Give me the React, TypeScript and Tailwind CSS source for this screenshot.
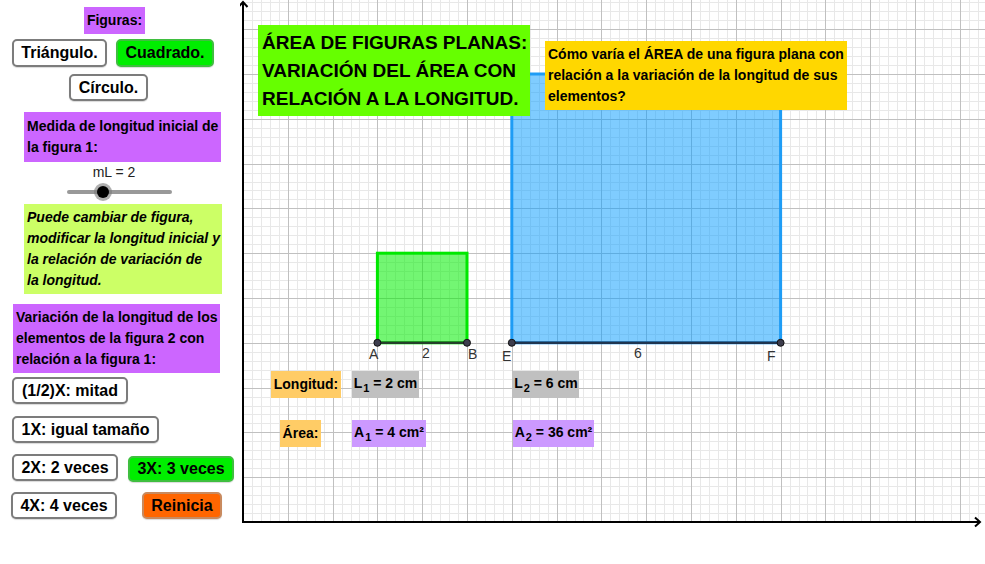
import React from 'react';

const OX = 243;
const OY = 522;
const U = 44.8;
const RIGHT = 985;
const LEFT_W = 240;

function Grid() {
  const minor = U / 5;
  const vLines: { x: number; major: boolean }[] = [];
  for (let i = 1; OX + i * minor <= RIGHT; i++) {
    vLines.push({ x: Math.round(OX + i * minor) + 0.5, major: i % 5 === 0 });
  }
  const hLines: { y: number; major: boolean }[] = [];
  for (let j = 1; OY - j * minor >= 0; j++) {
    hLines.push({ y: Math.round(OY - j * minor) + 0.5, major: j % 5 === 0 });
  }
  const minorV = vLines.filter((l) => !l.major);
  const majorV = vLines.filter((l) => l.major);
  const minorH = hLines.filter((l) => !l.major);
  const majorH = hLines.filter((l) => l.major);

  return (
    <g>
      {minorV.map((l) => (
        <line key={'mv' + l.x} x1={l.x} x2={l.x} y1={0} y2={OY} stroke="#e8e8e8" strokeWidth={1} />
      ))}
      {minorH.map((l) => (
        <line key={'mh' + l.y} x1={OX} x2={RIGHT} y1={l.y} y2={l.y} stroke="#e8e8e8" strokeWidth={1} />
      ))}
      {majorV.map((l) => (
        <line key={'Mv' + l.x} x1={l.x} x2={l.x} y1={0} y2={OY} stroke="#c0c0c0" strokeWidth={1} />
      ))}
      {majorH.map((l) => (
        <line key={'Mh' + l.y} x1={OX} x2={RIGHT} y1={l.y} y2={l.y} stroke="#c0c0c0" strokeWidth={1} />
      ))}
    </g>
  );
}

function Point({ x, y }: { x: number; y: number }) {
  return <circle cx={x} cy={y} r={3.5} fill="#3d3d4d" stroke="#111" strokeWidth={1} />;
}

function Canvas() {
  const px = (u: number) => OX + u * U;
  const py = (u: number) => OY - u * U;
  const labelStyle = { fontFamily: "'Liberation Sans', Arial, sans-serif", fontSize: 14 };

  return (
    <svg className="absolute inset-0" width={RIGHT - LEFT_W} height={564}>
      <g transform={`translate(${-LEFT_W} 0)`}>
        <Grid />

        {/* figura 1 */}
        <rect x={px(3)} y={py(6)} width={2 * U} height={2 * U} fill="#00ee00" fillOpacity={0.55} stroke="#00e800" strokeWidth={3} />
        <line x1={px(3)} y1={py(4)} x2={px(5)} y2={py(4)} stroke="#24402a" strokeWidth={2.5} />

        {/* figura 2 */}
        <rect x={px(6)} y={py(10)} width={6 * U} height={6 * U} fill="#0099ff" fillOpacity={0.5} stroke="#1e9cf5" strokeWidth={3} />
        <line x1={px(6)} y1={py(4)} x2={px(12)} y2={py(4)} stroke="#1f3550" strokeWidth={2.5} />

        {/* ejes */}
        <line x1={OX} y1={OY} x2={OX} y2={2} stroke="#000" strokeWidth={2} />
        <polyline points={`${OX - 4.5},${7} ${OX},${2} ${OX + 4.5},${7}`} fill="none" stroke="#000" strokeWidth={2} />
        <line x1={OX - 1} y1={OY} x2={980} y2={OY} stroke="#000" strokeWidth={2} />
        <polyline points={`${975},${OY - 4.5} ${980},${OY} ${975},${OY + 4.5}`} fill="none" stroke="#000" strokeWidth={2} />

        <Point x={px(3)} y={py(4)} />
        <Point x={px(5)} y={py(4)} />
        <Point x={px(6)} y={py(4)} />
        <Point x={px(12)} y={py(4)} />

        <g fill="#333" style={labelStyle}>
          <text x={369} y={359}>A</text>
          <text x={422} y={358}>2</text>
          <text x={468} y={359}>B</text>
          <text x={502} y={361}>E</text>
          <text x={634} y={358}>6</text>
          <text x={767} y={361}>F</text>
        </g>
      </g>
    </svg>
  );
}

function Btn({ label, w, tone = 'white', className = '' }: { label: string; w: string; tone?: 'white' | 'green' | 'orange'; className?: string }) {
  const tones = {
    white: 'bg-white border-[#7c7c7c]',
    green: 'bg-[#00ee00] border-[#3fbf3f]',
    orange: 'bg-[#ff6600] border-[#c98a5e]',
  };
  return (
    <button
      className={`${w} border-2 rounded-[5px] text-[16px] font-bold leading-none text-black shadow-[0_1px_1px_rgba(0,0,0,0.15)] flex items-center justify-center ${tones[tone]} ${className}`}
    >
      {label}
    </button>
  );
}

function Sub({ children }: { children: React.ReactNode }) {
  return <span className="text-[11px] relative top-[4px] ml-[1px]">{children}</span>;
}

export default function App() {
  return (
    <div className="w-[985px] h-[564px] bg-white flex overflow-hidden font-['Liberation_Sans',Arial,sans-serif] text-black">
      {/* panel izquierdo */}
      <div className="w-[240px] shrink-0 flex flex-col items-start">
        <div className="mt-[7px] ml-[84px] w-[61px] h-[27px] bg-[#cc66ff] text-[14px] font-bold flex items-center justify-center">
          Figuras:
        </div>

        <div className="mt-[5px] ml-[12px] flex gap-[9px]">
          <Btn label="Triángulo." w="w-[95px] h-[28px]" />
          <Btn label="Cuadrado." w="w-[98px] h-[28px]" tone="green" />
        </div>

        <Btn label="Círculo." w="w-[79px] h-[27px]" className="mt-[7px] ml-[69px]" />

        <div className="mt-[11px] ml-[24px] w-[197px] h-[50px] bg-[#cc66ff] px-[3px] py-[4px] text-[14px] leading-[21px] font-bold whitespace-nowrap">
          Medida de longitud inicial de
          <br />
          la figura 1:
        </div>

        <div className="mt-[1px] w-[228px] text-center text-[14px] leading-[18px] text-[#222]">mL = 2</div>

        <div className="mt-[9px] ml-[67px] relative w-[105px] h-[4px] rounded-full bg-[#999]">
          <div className="absolute left-[27px] top-[-7px] w-[18px] h-[18px] rounded-full bg-[#7a7a7a]/60 flex items-center justify-center">
            <div className="w-[12px] h-[12px] rounded-full bg-black" />
          </div>
        </div>

        <div className="mt-[10px] ml-[24px] w-[198px] h-[90px] bg-[#ccff66] px-[3px] py-[3px] text-[14px] leading-[21px] font-bold italic whitespace-nowrap">
          Puede cambiar de figura,
          <br />
          modificar la longitud inicial y
          <br />
          la relación de variación de
          <br />
          la longitud.
        </div>

        <div className="mt-[10px] ml-[13px] w-[207px] h-[69px] bg-[#cc66ff] px-[3px] py-[3px] text-[14px] leading-[21px] font-bold whitespace-nowrap">
          Variación de la longitud de los
          <br />
          elementos de la figura 2 con
          <br />
          relación a la figura 1:
        </div>

        <Btn label="(1/2)X: mitad" w="w-[116px] h-[27px]" className="mt-[4px] ml-[12px]" />
        <Btn label="1X: igual tamaño" w="w-[147px] h-[27px]" className="mt-[12px] ml-[12px]" />

        <div className="mt-[11px] ml-[12px] flex items-start gap-[10px]">
          <Btn label="2X: 2 veces" w="w-[106px] h-[27px]" />
          <Btn label="3X: 3 veces" w="w-[106px] h-[26px] mt-[2px]" tone="green" />
        </div>

        <div className="mt-[10px] ml-[11px] flex items-start gap-[25px]">
          <Btn label="4X: 4 veces" w="w-[106px] h-[27px]" />
          <Btn label="Reinicia" w="w-[80px] h-[27px]" tone="orange" />
        </div>
      </div>

      {/* vista gráfica */}
      <div className="relative flex-1 h-full">
        <Canvas />

        <div className="absolute left-[18px] top-[25px] w-[272px] h-[91px] bg-[#66ff00] px-[4px] py-[4px] text-[19px] leading-[28px] font-bold whitespace-nowrap">
          ÁREA DE FIGURAS PLANAS:
          <br />
          VARIACIÓN DEL ÁREA CON
          <br />
          RELACIÓN A LA LONGITUD.
        </div>

        <div className="absolute left-[305px] top-[41px] w-[302px] h-[69px] bg-[#ffd700] px-[3px] py-[3px] text-[14px] leading-[21px] font-bold whitespace-nowrap">
          Cómo varía el ÁREA de una figura plana con
          <br />
          relación a la variación de la longitud de sus
          <br />
          elementos?
        </div>

        <div className="absolute left-[31px] top-[371px] w-[70px] h-[27px] bg-[#ffcc66] text-[14px] font-bold flex items-center justify-center">
          Longitud:
        </div>
        <div className="absolute left-[112px] top-[371px] w-[67px] h-[27px] bg-[#c0c0c0] text-[14px] font-bold flex items-center justify-center whitespace-nowrap">
          <span className="-mt-[3px]">L<Sub>1</Sub> = 2 cm</span>
        </div>
        <div className="absolute left-[273px] top-[371px] w-[66px] h-[27px] bg-[#c0c0c0] text-[14px] font-bold flex items-center justify-center whitespace-nowrap">
          <span className="-mt-[3px]">L<Sub>2</Sub> = 6 cm</span>
        </div>

        <div className="absolute left-[40px] top-[420px] w-[41px] h-[27px] bg-[#ffcc66] text-[14px] font-bold flex items-center justify-center">
          Área:
        </div>
        <div className="absolute left-[112px] top-[420px] w-[74px] h-[27px] bg-[#cc99ff] text-[14px] font-bold flex items-center justify-center whitespace-nowrap">
          <span className="-mt-[3px]">A<Sub>1</Sub> = 4 cm²</span>
        </div>
        <div className="absolute left-[273px] top-[420px] w-[81px] h-[27px] bg-[#cc99ff] text-[14px] font-bold flex items-center justify-center whitespace-nowrap">
          <span className="-mt-[3px]">A<Sub>2</Sub> = 36 cm²</span>
        </div>
      </div>
    </div>
  );
}
